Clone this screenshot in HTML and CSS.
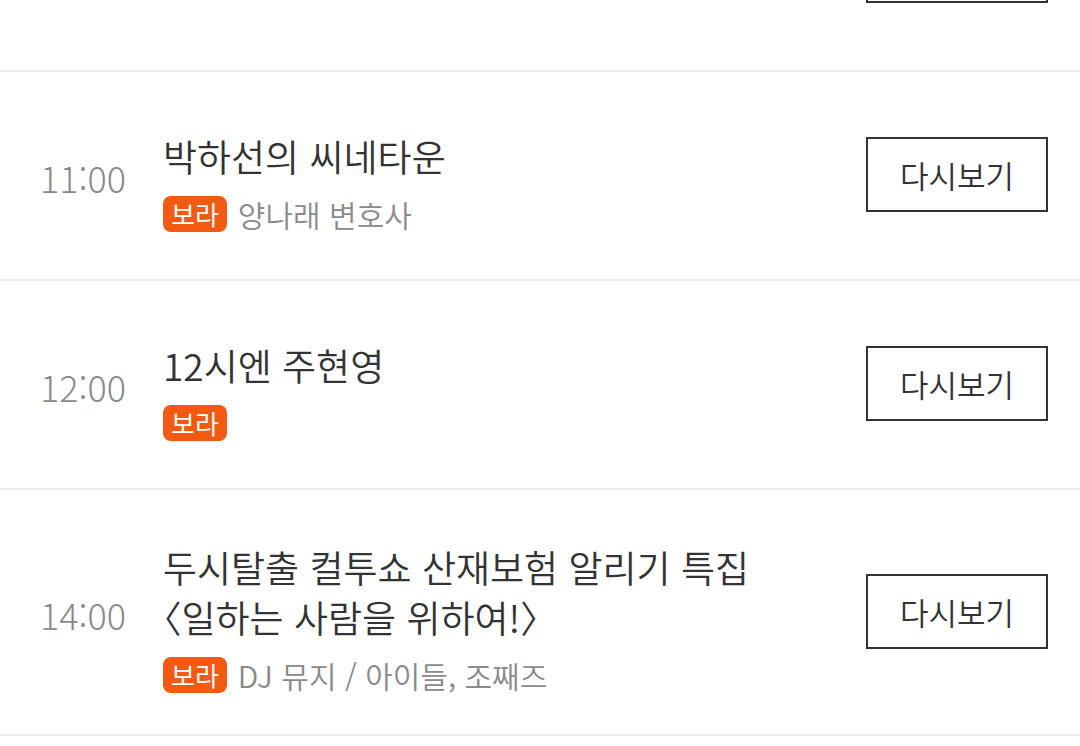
FILE: index.html
```html
<!DOCTYPE html>
<html lang="ko">
<head>
<meta charset="utf-8">
<title>편성표</title>
<link rel="stylesheet" href="styles.css">
</head>
<body>
<ul class="schedule">
  <li class="row">
    <div class="main"></div>
    <button class="replay" aria-label="다시보기"></button>
  </li>
  <li class="row">
    <div class="main">
      <span class="time">11:00</span>
      <div class="info">
        <p class="title">박하선의 씨네타운</p>
        <div class="meta"><span class="badge">보라</span><span class="desc">양나래 변호사</span></div>
      </div>
    </div>
    <button class="replay">다시보기</button>
  </li>
  <li class="row">
    <div class="main">
      <span class="time">12:00</span>
      <div class="info">
        <p class="title">12시엔 주현영</p>
        <div class="meta"><span class="badge">보라</span></div>
      </div>
    </div>
    <button class="replay">다시보기</button>
  </li>
  <li class="row">
    <div class="main">
      <span class="time">14:00</span>
      <div class="info">
        <p class="title">두시탈출 컬투쇼 산재보험 알리기 특집<br><span class="punct">〈</span>일하는 사람을 위하여!<span class="punct">〉</span></p>
        <div class="meta"><span class="badge">보라</span><span class="desc">DJ 뮤지 / 아이들, 조째즈</span></div>
      </div>
    </div>
    <button class="replay">다시보기</button>
  </li>
</ul>
</body>
</html>
```
FILE: styles.css
```css
* { box-sizing: border-box; }
html, body {
  margin: 0;
  padding: 0;
  background: #fff;
  overflow: hidden;
}
body {
  font-family: "Noto Sans CJK KR", "Noto Sans", sans-serif;
  color: #333;
}
.schedule {
  list-style: none;
  margin: -137px 0 0 0;
  padding: 0;
}
.row {
  display: flex;
  align-items: center;
  min-height: 209px;
  padding: 39px 32px 41px 40px;
  border-bottom: 2px solid #ebebeb;
}
.main {
  flex: 1;
  display: flex;
  align-items: center;
  margin-top: 13px;
  min-width: 0;
}
.time {
  width: 123px;
  flex: none;
  font-size: 36px;
  font-weight: 300;
  color: #8a8a8a;
  line-height: 50px;
  margin-bottom: 8px;
}
.info {
  flex: 1;
  min-width: 0;
}
.title {
  margin: 0;
  font-size: 37px;
  font-weight: 350;
  line-height: 50px;
  color: #333;
}
.punct {
  font-feature-settings: "halt";
}
.meta {
  display: flex;
  align-items: center;
  gap: 11px;
  margin-top: 15px;
  height: 36px;
}
.badge {
  display: inline-flex;
  align-items: center;
  justify-content: center;
  height: 36px;
  padding: 0 8px;
  border-radius: 8px;
  background: #f25912;
  color: #fff;
  font-size: 26px;
  line-height: 36px;
}
.desc {
  font-size: 30px;
  font-weight: 350;
  color: #8a8a8a;
  line-height: 36px;
}
.replay {
  flex: none;
  width: 182px;
  height: 75px;
  border: 2px solid #333;
  background: #fff;
  color: #333;
  font-family: inherit;
  font-size: 31px;
  font-weight: 350;
  padding: 0;
}
```
